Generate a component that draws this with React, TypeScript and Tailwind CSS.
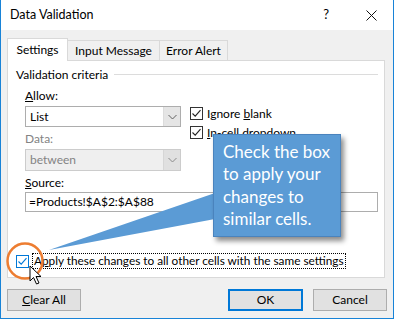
import React from 'react';

const UI_FONT = { fontFamily: 'Lato, "Noto Sans", sans-serif' };

const Check: React.FC<{ blue?: boolean }> = ({ blue }) => (
  <span
    className={`flex h-[13px] w-[13px] shrink-0 items-center justify-center border bg-white ${
      blue ? 'border-[#0078d7]' : 'border-[#333333]'
    }`}
  >
    <svg width="11" height="11" viewBox="0 0 11 11">
      <path d="M1.5 5.5 L4.2 8.2 L9.5 2.2" fill="none" stroke={blue ? '#0078d7' : '#222'} strokeWidth="1.1" />
    </svg>
  </span>
);

const Chevron: React.FC<{ color: string }> = ({ color }) => (
  <svg width="9" height="6" viewBox="0 0 9 6">
    <path d="M0.5 1 L4.5 5 L8.5 1" fill="none" stroke={color} strokeWidth="1" />
  </svg>
);

export default function App() {
  return (
    <div
      className="relative flex h-[319px] w-[394px] flex-col overflow-hidden border-x border-b border-[#1883d7] bg-[#f0f0f0] text-[12px] text-black"
      style={UI_FONT}
    >
      {/* title bar */}
      <div className="flex h-[30px] items-center bg-white pl-[9px] pr-[16px]">
        <span className="text-[12.5px]">Data Validation</span>
        <span className="ml-auto mr-[37px] text-[13px]">?</span>
        <svg width="11" height="11" viewBox="0 0 11 11">
          <path d="M0.5 0.5 L10.5 10.5 M10.5 0.5 L0.5 10.5" stroke="#111" strokeWidth="1" />
        </svg>
      </div>

      {/* tabs */}
      <div className="mt-[8px] flex items-end pl-[6px] leading-none">
        <div className="z-10 -mb-px flex h-[23px] w-[61px] items-center justify-center border border-b-0 border-[#d9d9d9] bg-white">
          Settings
        </div>
        <div className="flex h-[20px] w-[92px] items-center justify-center border border-b-0 border-l-0 border-[#d9d9d9] bg-[#f0f0f0]">
          Input Message
        </div>
        <div className="flex h-[20px] w-[68px] items-center justify-center border border-b-0 border-l-0 border-[#d9d9d9] bg-[#f0f0f0]">
          Error Alert
        </div>
      </div>

      {/* panel */}
      <div className="ml-[6px] mr-[8px] flex h-[218px] flex-col border border-[#d9d9d9] bg-white pl-[8px] pr-[6px] pt-[6px]">
        <div className="flex h-[15px] items-center gap-[6px]">
          <span>Validation criteria</span>
          <span className="h-px flex-1 bg-[#dcdcdc]" />
        </div>

        <div className="mt-[6px] flex pl-[9px]">
          <div className="flex w-[156px] flex-col">
            <div className="h-[15px] leading-[15px]">
              <span className="underline">A</span>llow:
            </div>
            <div className="mt-[3px] flex h-[21px] border border-[#adadad] bg-white">
              <span className="flex-1 pl-[4px] leading-[19px]">List</span>
              <span className="flex w-[17px] items-center justify-center border-l border-[#dcdcdc] bg-[#e5e5e5]">
                <Chevron color="#606060" />
              </span>
            </div>
            <div className="mt-[4px] h-[15px] leading-[15px] text-[#838383]">Data:</div>
            <div className="mt-[3px] flex h-[22px] border border-[#cccccc] bg-[#efefef]">
              <span className="flex-1 pl-[4px] leading-[20px] text-[#838383]">between</span>
              <span className="flex w-[17px] items-center justify-center border-l border-[#d6d6d6] bg-[#e0e0e0]">
                <Chevron color="#8a8a8a" />
              </span>
            </div>
          </div>

          <div className="ml-[9px] flex flex-col gap-[6px] pt-[19px]">
            <div className="flex h-[13px] items-center gap-[4px]">
              <Check />
              <span>
                Ignore <span className="underline">b</span>lank
              </span>
            </div>
            <div className="flex h-[13px] items-center gap-[4px]">
              <Check />
              <span>
                <span className="underline">I</span>n-cell dropdown
              </span>
            </div>
          </div>
        </div>

        <div className="mt-[4px] pl-[9px]">
          <div className="h-[15px] leading-[15px]">
            <span className="underline">S</span>ource:
          </div>
          <div className="mt-[2px] flex h-[20px] items-center border border-[#adadad] bg-white pl-[3px]">
            =Products!$A$2:$A$88
          </div>
        </div>

        <div className="mt-[41px] flex items-center gap-[3px]">
          <Check blue />
          <span className="border border-dotted border-black px-px text-[11.8px] leading-[14px]">
            A<span className="underline">p</span>ply these changes to all other cells with the same settings
          </span>
        </div>
      </div>

      {/* buttons */}
      <div className="mt-[11px] flex px-[6px] leading-none">
        <button className="h-[22px] w-[74px] border border-[#adadad] bg-[#e1e1e1]">
          <span className="underline">C</span>lear All
        </button>
        <button className="ml-auto h-[22px] w-[75px] border-2 border-[#0078d7] bg-[#e1e1e1]">OK</button>
        <button className="ml-[10px] h-[22px] w-[74px] border border-[#adadad] bg-[#e1e1e1]">Cancel</button>
      </div>

      {/* callout overlay */}
      <svg className="pointer-events-none absolute left-0 top-0" width="394" height="319">
        <polygon points="48,250 214,193 214,219" fill="#5b9bd5" />
        <circle cx="24" cy="261" r="17.5" fill="none" stroke="#ed7d31" strokeWidth="2.5" />
        <path
          d="M29 266 L29 281 L32.5 277.5 L35.5 284 L38 283 L35 276.5 L40 276.5 Z"
          fill="white"
          stroke="black"
          strokeWidth="1"
          strokeLinejoin="round"
        />
      </svg>
      <div
        className="absolute left-[212px] top-[134px] flex h-[103px] w-[128px] flex-col justify-center border border-[#4a83bd] bg-[#5b9bd5] pl-[9px] text-[17px] leading-[22.5px] text-white shadow-[3px_4px_5px_rgba(0,0,0,0.45)]"
        style={{ fontFamily: 'Lato, "Open Sans", sans-serif' }}
      >
        <span>Check the box</span>
        <span>to apply your</span>
        <span>changes to</span>
        <span>similar cells.</span>
      </div>
    </div>
  );
}
